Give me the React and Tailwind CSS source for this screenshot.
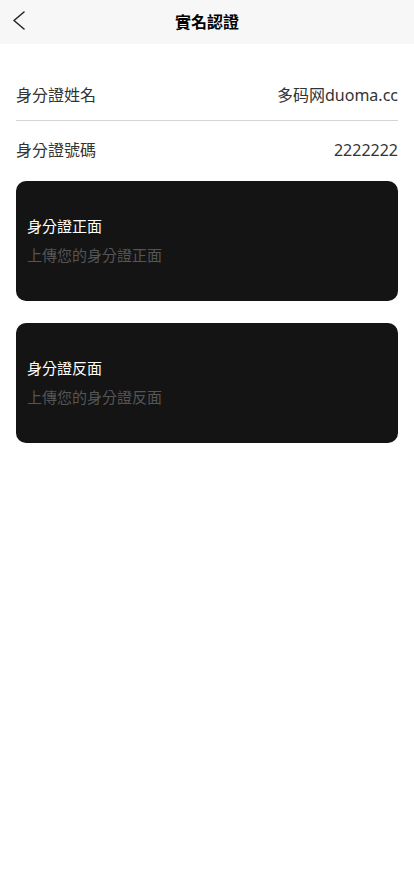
const font = { fontFamily: '"Noto Sans", "Noto Sans CJK TC", sans-serif' }

const UploadCard = ({ title, hint }) => (
  <div className="h-[120px] rounded-[10px] bg-[#141414] px-[11px] pb-[1px] flex flex-col justify-center gap-[7px]">
    <p className="text-[15px] leading-[22px] font-normal text-white">{title}</p>
    <p className="text-[15px] leading-[22px] text-[#555555]">{hint}</p>
  </div>
)

export default function App() {
  return (
    <div className="min-h-[896px] bg-white" style={font}>
      {/* Header */}
      <div className="relative h-[44px] bg-[#f7f7f7] flex items-center justify-center">
        <button className="absolute left-[12px] top-[11px]">
          <svg width="14" height="20" viewBox="0 0 14 20" fill="none">
            <polyline points="12,1 2,9.5 12,18" stroke="#222" strokeWidth="1.5" strokeLinecap="round" strokeLinejoin="round" />
          </svg>
        </button>
        <h1 className="text-[16px] font-bold text-black">實名認證</h1>
      </div>

      {/* Info rows */}
      <div className="px-4 mt-[26px]">
        <div className="h-[51px] border-b border-[#d4d4d4] flex items-center justify-between text-[16px] text-[#333]">
          <span>身分證姓名</span>
          <span>多码网duoma.cc</span>
        </div>
        <div className="h-[58px] flex items-center justify-between text-[16px] text-[#333]">
          <span>身分證號碼</span>
          <span>2222222</span>
        </div>

        {/* Upload cards */}
        <div className="mt-[2px] flex flex-col gap-[22px]">
          <UploadCard title="身分證正面" hint="上傳您的身分證正面" />
          <UploadCard title="身分證反面" hint="上傳您的身分證反面" />
        </div>
      </div>
    </div>
  )
}
